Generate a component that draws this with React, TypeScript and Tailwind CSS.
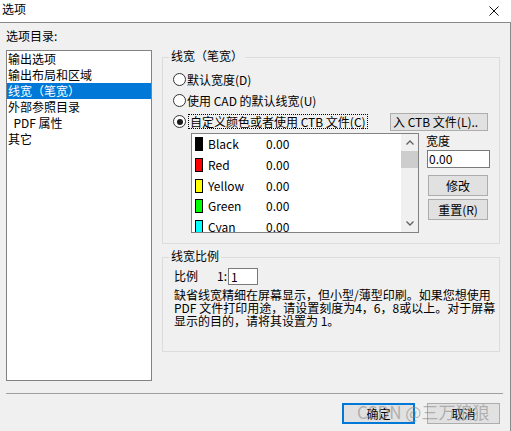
import React from 'react'

const navItems = ['输出选项', '输出布局和区域', '线宽（笔宽）', '外部参照目录', '\u00a0\u00a0PDF 属性', '其它']

const penColors = [
  { name: 'Black', color: 'bg-black' },
  { name: 'Red', color: 'bg-[#ff0000]' },
  { name: 'Yellow', color: 'bg-[#ffff00]' },
  { name: 'Green', color: 'bg-[#00ff00]' },
  { name: 'Cyan', color: 'bg-[#00ffff]' },
]

const Radio = ({ checked = false }: { checked?: boolean }) => (
  <span className="w-[13px] h-[13px] rounded-full border border-[#333] bg-white flex items-center justify-center shrink-0">
    {checked && <span className="w-[6px] h-[6px] rounded-full bg-[#1a1a1a]" />}
  </span>
)

const Chevron = ({ up }: { up?: boolean }) => (
  <svg width="8" height="5" viewBox="0 0 8 5" className="block">
    <path d={up ? 'M0.5 4.5 L4 1 L7.5 4.5' : 'M0.5 0.5 L4 4 L7.5 0.5'} fill="none" stroke="#606060" strokeWidth="1.3" />
  </svg>
)

export default function App() {
  return (
    <div className="w-[511px] h-[431px] bg-white overflow-hidden relative text-black text-[12px] font-['Noto_Sans_CJK_SC','Noto_Sans',sans-serif]">
      {/* title bar */}
      <div className="h-[22px] bg-white flex items-start justify-between">
        <span className="pl-[2px] pt-[1px] leading-[16px]">选项</span>
        <svg width="10" height="10" viewBox="0 0 10 10" className="mt-[6px] mr-[12px]">
          <path d="M0.5 0.5 L9.5 9.5 M9.5 0.5 L0.5 9.5" stroke="#111" strokeWidth="1" />
        </svg>
      </div>

      <div className="h-[409px] w-[511px] bg-[#f0f0f0] border-t border-r border-[#8a8a8a] pl-[6px] pt-[5px]">
        <div className="flex items-start">
          {/* left tree */}
          <div className="w-[146px]">
            <div className="h-[22px] leading-[16px]">选项目录:</div>
            <div className="h-[331px] bg-white border border-[#828282]">
              {navItems.map((item, i) => (
                <div
                  key={item}
                  className={`h-[16px] leading-[16px] pl-[1px] whitespace-pre ${i === 2 ? 'bg-[#0078d7] text-white' : ''}`}
                >
                  {item}
                </div>
              ))}
            </div>
          </div>

          {/* right panel */}
          <div className="ml-[10px] mt-[29px] w-[338px]">
            <div className="relative h-[187px] border border-[#dcdcdc] pl-[10px] pt-[11px]">
              <span className="absolute left-[6px] -top-[9px] px-[2px] bg-[#f0f0f0] leading-[14px]">线宽（笔宽）</span>

              <div className="h-[21px] flex items-center">
                <Radio />
                <span className="ml-[1px] leading-[14px]">默认宽度(D)</span>
              </div>
              <div className="h-[21px] flex items-center">
                <Radio />
                <span className="ml-[1px] leading-[14px]">使用 CAD 的默认线宽(U)</span>
              </div>
              <div className="h-[21px] w-[315px] flex items-center">
                <Radio checked />
                <span className="ml-[2px] px-[1px] leading-[13px] border border-dotted border-black">自定义颜色或者使用 CTB 文件(C)</span>
                <button className="ml-auto w-[98px] h-[18px] bg-[#e1e1e1] border border-[#adadad] leading-[14px] text-left pl-[2px] overflow-hidden whitespace-nowrap">
                  入 CTB 文件(L)..
                </button>
              </div>

              <div className="flex items-start mt-[1px] ml-[18px]">
                <div className="w-[228px] h-[100px] bg-white border border-[#828282] flex">
                  <div className="flex-1 overflow-hidden">
                    {penColors.map((c) => (
                      <div key={c.name} className="h-[20.7px] flex items-center">
                        <span className={`ml-[3px] w-[8px] h-[14px] border border-black ${c.color}`} />
                        <span className="ml-[5px] w-[58px] leading-[14px]">{c.name}</span>
                        <span className="leading-[14px]">0.00</span>
                      </div>
                    ))}
                  </div>
                  <div className="w-[17px] bg-[#f0f0f0] flex flex-col">
                    <div className="h-[17px] flex items-center justify-center">
                      <Chevron up />
                    </div>
                    <div className="h-[17px] bg-[#cdcdcd]" />
                    <div className="flex-1" />
                    <div className="h-[17px] flex items-center justify-center">
                      <Chevron />
                    </div>
                  </div>
                </div>

                <div className="ml-[7px] w-[64px]">
                  <div className="h-[16px] leading-[16px]">宽度</div>
                  <div className="mt-[1px] ml-[1px] w-[63px] h-[18px] bg-white border border-[#7a7a7a] pl-[1px] leading-[16px]">0.00</div>
                  <button className="mt-[7px] ml-[2px] w-[60px] h-[21px] bg-[#e1e1e1] border border-[#adadad] leading-[19px] text-center">修改</button>
                  <button className="mt-[3px] ml-[2px] w-[60px] h-[21px] bg-[#e1e1e1] border border-[#adadad] leading-[19px] text-center">重置(R)</button>
                </div>
              </div>
            </div>

            <div className="relative mt-[13px] h-[95px] border border-[#dcdcdc] pl-[11px] pt-[8px]">
              <span className="absolute left-[6px] -top-[9px] px-[2px] bg-[#f0f0f0] leading-[14px]">线宽比例</span>
              <div className="h-[20px] flex items-center">
                <span className="w-[43px] leading-[14px]">比例</span>
                <span className="w-[11px] leading-[14px]">1:</span>
                <span className="w-[30px] h-[17px] bg-white border border-[#7a7a7a] pl-[2px] leading-[15px]">1</span>
              </div>
              <p className="mt-[2px] leading-[13px] whitespace-nowrap">
                缺省线宽精细在屏幕显示，但小型/薄型印刷。如果您想使用
                <br />
                PDF 文件打印用途，请设置刻度为4，6，8或以上。对于屏幕
                <br />
                显示的目的，请将其设置为 1。
              </p>
            </div>
          </div>
        </div>

        <div className="mt-[12px] w-[497px] h-px bg-[#a0a0a0]" />

        <div className="mt-[9px] w-[494px] flex justify-end gap-[12px]">
          <button className="w-[73px] h-[21px] bg-[#e1e1e1] border-2 border-[#0078d7] leading-[17px] text-center">确定</button>
          <button className="w-[73px] h-[21px] bg-[#e1e1e1] border border-[#adadad] leading-[19px] text-center">取消</button>
        </div>
      </div>

      {/* watermark */}
      <span className="absolute left-[357px] top-[401px] text-[17px] leading-[22px] text-[#8c8c8c]/60 whitespace-nowrap pointer-events-none">
        CSDN @三万狼狼
      </span>
    </div>
  )
}
